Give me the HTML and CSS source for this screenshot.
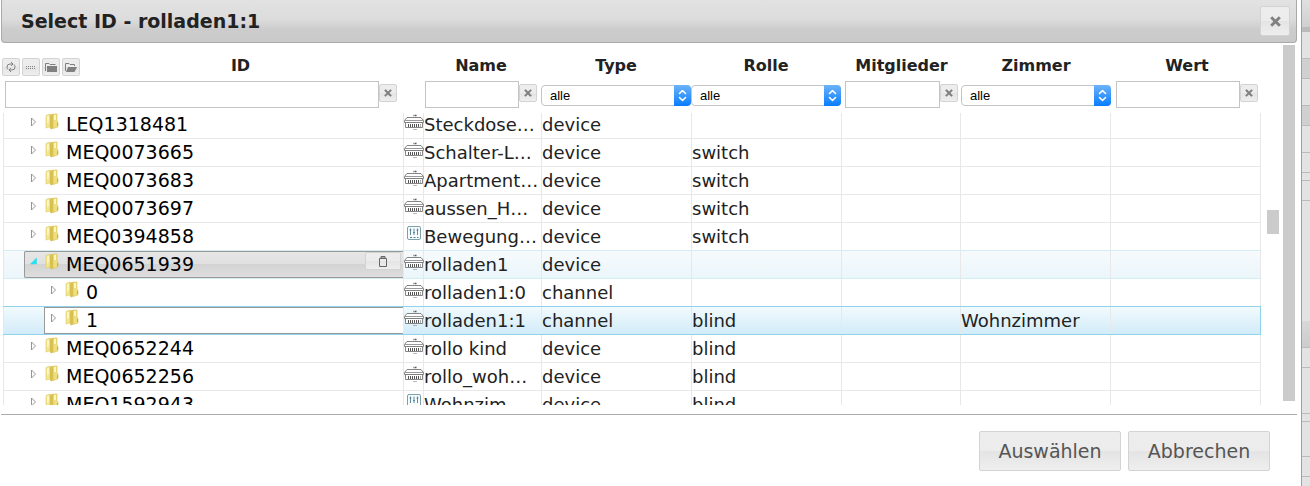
FILE: index.html
```html
<!DOCTYPE html>
<html lang="de">
<head>
  <meta charset="UTF-8">
  <title>Select ID</title>
  <link rel="stylesheet" href="styles.css">
</head>
<body>

  <!-- Icons -->
  <svg class="sprite" aria-hidden="true">
    <symbol id="i-close" viewBox="0 0 10 10">
      <path d="M2 2 L8 8 M8 2 L2 8" fill="none" stroke="#808080" stroke-width="2.6" stroke-linecap="square"/>
    </symbol>
    <symbol id="i-refresh" viewBox="0 0 12 12">
      <path d="M6 1 L8 3 L6 5 M8 3 H5 Q2 3 2 6 Q2 7.500 3 8.500 M6 7 L4 9 L6 11 M4 9 H7 Q10 9 10 6 Q10 4.500 9 3.500" fill="none" stroke="#808080"/>
    </symbol>
    <symbol id="i-lines" viewBox="0 0 12 12">
      <path d="M1 5.500 H11 M1 7.500 H11" fill="none" stroke="#808080" stroke-dasharray="1 1"/>
    </symbol>
    <symbol id="i-collapsed" viewBox="0 0 12 12">
      <path d="M.5 10 V2.500 H4 L5 3.500 H10.500" fill="none" stroke="#808080"/>
      <path d="M2 5 H12 V11 H2 Z" fill="#808080"/>
    </symbol>
    <symbol id="i-expanded" viewBox="0 0 12 12">
      <path d="M.5 10 V2.500 H4 L5 3.500 H9.500 V5" fill="none" stroke="#808080"/>
      <path d="M3 6 H12 L9.500 11 H1 Z" fill="#808080"/>
    </symbol>
    <symbol id="i-updown" viewBox="0 0 16 21">
      <path d="M5 8.500 L8 5.500 L11 8.500 M5 12.500 L8 15.500 L11 12.500" fill="none" stroke="#fff" stroke-width="1.600" stroke-linecap="round" stroke-linejoin="round"/>
    </symbol>
    <symbol id="i-closed" viewBox="0 0 8 10">
      <path d="M2.500 1 L6.500 5 L2.500 9 Z" fill="#fff" stroke="#8a8a8a" stroke-width=".9"/>
    </symbol>
    <symbol id="i-open" viewBox="0 0 8 10">
      <path d="M7.500 1 V7 H1.500 Z" fill="#1ce6f6" stroke="#30d0e6" stroke-width=".5"/>
    </symbol>
    <symbol id="i-folder" viewBox="0 0 14 17">
      <path d="M1 2.500 L5 1 V14 L1 15 Z" fill="#f3e68c" stroke="#dccb6c" stroke-width=".6"/>
      <path d="M8 1 H12 V8 L13 9 V14 L8 15.500 Z" fill="#efdf7c" stroke="#d6c35c" stroke-width=".6"/>
      <path d="M5 1.500 L8 1 V15.500 L6 16.500 L5 15 Z" fill="#d8c052"/>
      <path d="M2 3.500 L4 2.500 V9 L2 10 Z M9 2 H11 V7 H9 Z" fill="#fbf6bd"/>
      <path d="M12.500 10 V13" stroke="#6fc2b4"/>
    </symbol>
    <symbol id="i-rail" viewBox="0 0 20 18">
      <path d="M3 4.500 H17 L19.500 7.500 V9.500 H.5 V7.500 Z" fill="#fff" stroke="#777" stroke-width=".9"/>
      <path d="M1 7.500 H19" stroke="#999"/>
      <path d="M1.500 9.500 H18.500 V14.500 H1.500 Z" fill="#fff" stroke="#777" stroke-width=".9"/>
      <path d="M4 12.500 H16.500" stroke="#555" stroke-width="3" stroke-dasharray="1 1"/>
      <path d="M9.500 2.500 H13" stroke="#555" stroke-width="1.500" stroke-dasharray="1 .5"/>
      <path d="M9.500 16.500 H13" stroke="#777" stroke-dasharray="1 1"/>
    </symbol>
    <symbol id="i-mixer" viewBox="0 0 14 14">
      <rect x=".5" y=".5" width="13" height="13" rx="1.500" fill="#f8fcfd" stroke="#7ba0ae"/>
      <path d="M3.500 2.500 V9 M7 2.500 V9 M10.500 2.500 V9 M2.500 4 H4.500 M6 6.500 H8 M9.500 4 H11.500" stroke="#4b8093" stroke-width=".9"/>
      <path d="M3 11.500 H11.500" stroke="#4b8093" stroke-dasharray="2 1.500"/>
    </symbol>
    <symbol id="i-clipboard" viewBox="0 0 10 12">
      <path d="M1.500 3.500 H8.500 V11.500 H1.500 Z" fill="none" stroke="#666"/>
      <path d="M3 3 H7 V1.500 H3 Z" fill="#eee" stroke="#666"/>
    </symbol>
  </svg>

  <div class="page">
    <div class="dialog" role="dialog" aria-labelledby="title">
      <div class="titlebar">
        <h1 id="title">Select ID - rolladen1:1</h1>
        <button class="btn close" aria-label="Schließen"><svg><use href="#i-close"/></svg></button>
      </div>

      <div class="content">
        <div class="main">
          <div class="filters">
            <div class="filter f-id">
              <div class="head">
                <div class="tools">
                  <button class="btn mini" aria-label="Aktualisieren"><svg><use href="#i-refresh"/></svg></button>
                  <button class="btn mini" aria-label="Liste"><svg><use href="#i-lines"/></svg></button>
                  <button class="btn mini" aria-label="Alle zuklappen"><svg><use href="#i-collapsed"/></svg></button>
                  <button class="btn mini" aria-label="Alle aufklappen"><svg><use href="#i-expanded"/></svg></button>
                </div>
                <label for="f-id">ID</label>
              </div>
              <div class="field"><input type="text" id="f-id"><button class="btn mini" aria-label="ID leeren"><svg><use href="#i-close"/></svg></button></div>
            </div>
            <div class="filter f-name">
              <div class="head"><label for="f-name">Name</label></div>
              <div class="field"><input type="text" id="f-name"><button class="btn mini" aria-label="Name leeren"><svg><use href="#i-close"/></svg></button></div>
            </div>
            <div class="filter">
              <div class="head"><label for="f-type">Type</label></div>
              <div class="select"><select id="f-type"><option>alle</option></select><svg><use href="#i-updown"/></svg></div>
            </div>
            <div class="filter">
              <div class="head"><label for="f-role">Rolle</label></div>
              <div class="select"><select id="f-role"><option>alle</option></select><svg><use href="#i-updown"/></svg></div>
            </div>
            <div class="filter f-members">
              <div class="head"><label for="f-members">Mitglieder</label></div>
              <div class="field"><input type="text" id="f-members"><button class="btn mini" aria-label="Mitglieder leeren"><svg><use href="#i-close"/></svg></button></div>
            </div>
            <div class="filter">
              <div class="head"><label for="f-room">Zimmer</label></div>
              <div class="select"><select id="f-room"><option>alle</option></select><svg><use href="#i-updown"/></svg></div>
            </div>
            <div class="filter f-value">
              <div class="head"><label for="f-value">Wert</label></div>
              <div class="field"><input type="text" id="f-value"><button class="btn mini" aria-label="Wert leeren"><svg><use href="#i-close"/></svg></button></div>
            </div>
          </div>

          <div class="tree">
            <table>
              <colgroup>
                <col class="c-id"><col class="c-icon"><col class="c-name"><col class="c-wide"><col class="c-wide"><col class="c-members"><col class="c-wide"><col class="c-wide">
              </colgroup>
              <tbody>
                <tr>
                  <td><div class="node"><svg class="exp"><use href="#i-closed"/></svg><svg class="folder"><use href="#i-folder"/></svg><span>LEQ1318481</span></div></td>
                  <td><svg class="dev"><use href="#i-rail"/></svg></td>
                  <td>Steckdose…</td><td>device</td><td></td><td></td><td></td><td></td>
                </tr>
                <tr>
                  <td><div class="node"><svg class="exp"><use href="#i-closed"/></svg><svg class="folder"><use href="#i-folder"/></svg><span>MEQ0073665</span></div></td>
                  <td><svg class="dev"><use href="#i-rail"/></svg></td>
                  <td>Schalter-L…</td><td>device</td><td>switch</td><td></td><td></td><td></td>
                </tr>
                <tr>
                  <td><div class="node"><svg class="exp"><use href="#i-closed"/></svg><svg class="folder"><use href="#i-folder"/></svg><span>MEQ0073683</span></div></td>
                  <td><svg class="dev"><use href="#i-rail"/></svg></td>
                  <td>Apartment…</td><td>device</td><td>switch</td><td></td><td></td><td></td>
                </tr>
                <tr>
                  <td><div class="node"><svg class="exp"><use href="#i-closed"/></svg><svg class="folder"><use href="#i-folder"/></svg><span>MEQ0073697</span></div></td>
                  <td><svg class="dev"><use href="#i-rail"/></svg></td>
                  <td>aussen_H…</td><td>device</td><td>switch</td><td></td><td></td><td></td>
                </tr>
                <tr>
                  <td><div class="node"><svg class="exp"><use href="#i-closed"/></svg><svg class="folder"><use href="#i-folder"/></svg><span>MEQ0394858</span></div></td>
                  <td><svg class="dev mixer"><use href="#i-mixer"/></svg></td>
                  <td>Bewegung…</td><td>device</td><td>switch</td><td></td><td></td><td></td>
                </tr>
                <tr class="hover">
                  <td><div class="node"><svg class="exp"><use href="#i-open"/></svg><svg class="folder"><use href="#i-folder"/></svg><span>MEQ0651939</span><button class="btn copy" aria-label="Kopieren"><svg><use href="#i-clipboard"/></svg></button></div></td>
                  <td><svg class="dev"><use href="#i-rail"/></svg></td>
                  <td>rolladen1</td><td>device</td><td></td><td></td><td></td><td></td>
                </tr>
                <tr>
                  <td><div class="node child"><svg class="exp"><use href="#i-closed"/></svg><svg class="folder"><use href="#i-folder"/></svg><span>0</span></div></td>
                  <td><svg class="dev"><use href="#i-rail"/></svg></td>
                  <td>rolladen1:0</td><td>channel</td><td></td><td></td><td></td><td></td>
                </tr>
                <tr class="active">
                  <td><div class="node child"><svg class="exp"><use href="#i-closed"/></svg><svg class="folder"><use href="#i-folder"/></svg><span>1</span></div></td>
                  <td><svg class="dev"><use href="#i-rail"/></svg></td>
                  <td>rolladen1:1</td><td>channel</td><td>blind</td><td></td><td>Wohnzimmer</td><td></td>
                </tr>
                <tr>
                  <td><div class="node"><svg class="exp"><use href="#i-closed"/></svg><svg class="folder"><use href="#i-folder"/></svg><span>MEQ0652244</span></div></td>
                  <td><svg class="dev"><use href="#i-rail"/></svg></td>
                  <td>rollo kind</td><td>device</td><td>blind</td><td></td><td></td><td></td>
                </tr>
                <tr>
                  <td><div class="node"><svg class="exp"><use href="#i-closed"/></svg><svg class="folder"><use href="#i-folder"/></svg><span>MEQ0652256</span></div></td>
                  <td><svg class="dev"><use href="#i-rail"/></svg></td>
                  <td>rollo_woh…</td><td>device</td><td>blind</td><td></td><td></td><td></td>
                </tr>
                <tr>
                  <td><div class="node"><svg class="exp"><use href="#i-closed"/></svg><svg class="folder"><use href="#i-folder"/></svg><span>MEQ1592943</span></div></td>
                  <td><svg class="dev mixer"><use href="#i-mixer"/></svg></td>
                  <td>Wohnzim…</td><td>device</td><td>blind</td><td></td><td></td><td></td>
                </tr>
              </tbody>
            </table>
            <div class="thumb"></div>
          </div>
        </div>
        <div class="scrollbar"></div>
      </div>

      <div class="buttons">
        <button class="btn">Auswählen</button>
        <button class="btn">Abbrechen</button>
      </div>
    </div>

    <!-- Seite hinter dem Dialog -->
    <div class="behind">
      <div class="strip top"></div>
      <div class="strip light"></div>
      <div class="strip grip"></div>
      <div class="strip light"></div>
      <div class="strip grip"></div>
      <div class="strip light"></div>
      <div class="strip row"></div>
      <div class="strip gap"></div>
      <div class="strip row"></div>
      <div class="strip tall"></div>
      <div class="strip tab"></div>
      <div class="strip row"></div>
      <div class="strip field-row"></div>
      <div class="strip gap"></div>
      <div class="strip"></div>
      <div class="strip row"></div>
    </div>
  </div>

</body>
</html>
```

FILE: styles.css
```css
* {
  box-sizing: border-box;
}

body {
  margin: 0;
  background: #fff;
  color: #222;
  font-family: "DejaVu Sans", Verdana, sans-serif;
  font-size: 18px;
  overflow: hidden;
}

.sprite {
  display: none;
}

.page {
  display: flex;
  min-height: 100vh;
}

.dialog {
  flex: 1;
  min-width: 0;
  padding: 0 4px 0 1px;
  border-right: 1px solid #a0a0a0;
}

.titlebar {
  display: flex;
  align-items: center;
  justify-content: space-between;
  height: 43px;
  padding: 0 6px 0 19px;
  border: 1px solid #aaa;
  border-top: 0;
  border-radius: 0 0 4px 4px;
  background: linear-gradient(#e2e2e2, #dcdcdc 45%, #cccccc 70%, #cacaca);
}

h1 {
  margin: 0;
  font-size: 19px;
  font-weight: bold;
}

.btn {
  display: flex;
  align-items: center;
  justify-content: center;
  padding: 0;
  border: 1px solid #d3d3d3;
  border-radius: 2px;
  background: linear-gradient(#ededed, #ececec 50%, #e4e4e4 50%, #eeeeee);
  color: #555;
  font-family: inherit;
  font-size: 19px;
}

.close {
  width: 30px;
  height: 30px;
}

.close svg {
  width: 11px;
  height: 11px;
}

.mini {
  flex: none;
  width: 18px;
  height: 18px;
}

.mini svg {
  width: 12px;
  height: 12px;
}

.field .mini svg {
  width: 8px;
  height: 8px;
}

.content {
  display: flex;
  padding: 2px 2px 0 0;
}

.main {
  flex: 1;
  min-width: 0;
}

.scrollbar {
  flex: none;
  width: 12px;
  margin-bottom: 4px;
  background: #cbcbcb;
}

/* Filterzeile */
.filters {
  display: grid;
  grid-template-columns: 1fr 118px 150px 150px 120px 150px 150px;
  height: 68px;
  padding: 13px 22px 0 1px;
}

.head {
  display: flex;
  height: 23px;
  font-size: 16px;
  line-height: 16px;
  font-weight: bold;
}

.head label {
  flex: 1;
  text-align: center;
}

.tools {
  display: flex;
  gap: 2px;
}

.f-id {
  padding-right: 26px;
}

.f-id .head {
  margin-right: -4px;
}

.f-id .field {
  padding-left: 3px;
}

.f-name {
  padding: 0 4px 0 2px;
}

.f-members {
  padding: 0 3px 0 4px;
}

.f-value {
  padding: 0 3px 0 5px;
}

.field {
  display: flex;
}

.field input {
  flex: 1;
  min-width: 0;
  height: 27px;
  border: 1px solid #c4c4c4;
  background: #fff;
}

.field .mini {
  margin-top: 3px;
}

.select {
  position: relative;
  margin-top: 4px;
}

.select select {
  display: block;
  width: 100%;
  height: 21px;
  padding: 0 8px;
  appearance: none;
  border: 1px solid #c4c4c4;
  border-radius: 4px;
  background: #fff;
  color: #000;
  font-family: "Liberation Sans", Arial, sans-serif;
  font-size: 13px;
}

.select svg {
  position: absolute;
  top: 0;
  right: 0;
  width: 17px;
  height: 21px;
  border-radius: 0 4px 4px 0;
  background: linear-gradient(#6cb3fa, #087dff);
  pointer-events: none;
}

/* Baum */
.tree {
  display: flex;
  align-items: flex-start;
  justify-content: space-between;
  height: 292px;
  padding-right: 4px;
  overflow: hidden;
}

table {
  flex: 1;
  table-layout: fixed;
  width: 0;
  margin: -3px 6px 0 2px;
  border-collapse: collapse;
  line-height: 27px;
  white-space: nowrap;
}

.c-icon {
  width: 20px;
}

.c-name {
  width: 118px;
}

.c-wide {
  width: 150px;
}

.c-members {
  width: 119px;
}

td {
  height: 28px;
  padding: 0;
  border: 1px solid #e8e8e8;
}

td:first-child {
  color: #000;
  font-size: 19px;
}

.node {
  display: flex;
  align-items: center;
  height: 27px;
  margin-left: 20px;
  padding-left: 4px;
  border: 1px solid transparent;
  border-right: 0;
}

.node.child {
  margin-left: 40px;
}

.exp {
  width: 8px;
  height: 10px;
  margin: 0 8px 6px 0;
}

.folder {
  width: 14px;
  height: 17px;
  margin: 0 7px 6px 0;
}

.dev {
  display: block;
  width: 20px;
  height: 18px;
  margin-bottom: 6px;
}

.mixer {
  width: 14px;
  height: 14px;
  margin: 0 auto 8px;
}

tr:has(+ .hover) td,
.hover td {
  border-bottom-color: #d4edf2;
}

.hover {
  background: linear-gradient(#f7fafc, #eaf6fb);
}

.hover .node {
  border-color: #999;
  border-radius: 2px 0 0 2px;
  background: linear-gradient(#e6e6e6, #e0e0e0 50%, #d3d3d3 50%, #dedede);
}

tr:has(+ .active) td,
.active td {
  border-bottom-color: #8fd3e8;
}

.active td:last-child {
  border-right-color: #8fd3e8;
}

.active {
  background: linear-gradient(#f2fafd, #d0ebf9);
}

.active .node {
  border-color: #999;
  background: #fff;
}

.copy {
  align-self: flex-start;
  width: 36px;
  height: 18px;
  margin-right: 2px;
  margin-left: auto;
}

.copy svg {
  width: 10px;
  height: 12px;
}

.thumb {
  flex: none;
  width: 12px;
  height: 24px;
  margin-top: 97px;
  background: #cbcbcb;
}

.buttons {
  display: flex;
  justify-content: flex-end;
  gap: 7px;
  margin-top: 9px;
  padding: 16px 27px 15px 0;
  border-top: 1px solid #aaa;
}

.buttons .btn {
  width: 142px;
  height: 40px;
  padding-bottom: 1px;
}

.behind {
  display: flex;
  flex-direction: column;
  flex: none;
  width: 8px;
  height: 486px;
  background: #e3e3e3;
}

.strip {
  flex: none;
  height: 35px;
  border-bottom: 1px solid #bbb;
}

.top {
  height: 32px;
  border-bottom: 5px solid #bbb;
  background: linear-gradient(#e0e0e0, #d0d0d0);
}

.light {
  height: 27px;
}

.grip {
  height: 20px;
  background: #d0d0d0;
}

.row {
  height: 20px;
}

.gap {
  height: 8px;
}

.tall {
  height: 120px;
  border-bottom: 0;
}

.tab {
  height: 27px;
  background: linear-gradient(#d8d8d8, #cccccc);
}

.field-row {
  height: 46px;
}
```
